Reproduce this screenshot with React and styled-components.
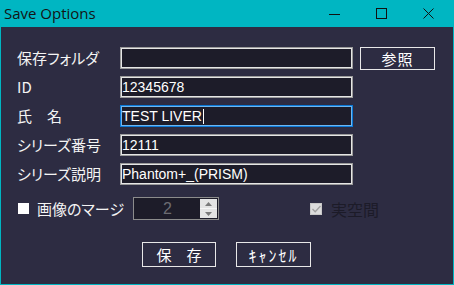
import React from "react";
import styled, { createGlobalStyle } from "styled-components";

const Global = createGlobalStyle`
  html, body { margin: 0; padding: 0; background: #2d2c42; }
  * { box-sizing: border-box; }
`;

const Window = styled.div`
  width: 454px;
  height: 285px;
  border: 1px solid #00b6c2;
  border-top: none;
  background: #2d2c42;
  display: flex;
  flex-direction: column;
  font-family: "Noto Sans CJK JP", "Noto Sans", sans-serif;
  font-feature-settings: "palt";
`;

const TitleBar = styled.div`
  height: 27px;
  margin: 0 -1px;
  background: #00b6c2;
  display: flex;
  align-items: center;
  flex-shrink: 0;
`;

const Title = styled.div`
  flex: 1;
  padding-left: 4px;
  font-family: "Open Sans", "Noto Sans", sans-serif;
  font-size: 15px;
  color: #141414;
  line-height: 27px;
`;

const Controls = styled.div`
  display: flex;
  height: 27px;
  margin-right: 2px;
`;

const Ctrl = styled.div`
  width: 47px;
  height: 27px;
  display: flex;
  align-items: center;
  justify-content: center;
`;

const Body = styled.div`
  flex: 1;
  padding: 20px 0 0 16px;
  display: flex;
  flex-direction: column;
`;

const Form = styled.div`
  display: grid;
  grid-template-columns: 103px 233px 75px;
  grid-auto-rows: 22px;
  column-gap: 0;
  row-gap: 7px;
`;

const Label = styled.div`
  color: #f4f4f4;
  font-size: 15px;
  line-height: 22px;
  white-space: pre;
`;

const Field = styled.div`
  height: 22px;
  background: #1d1c29;
  border: 1px solid ${(p) => (p.$focus ? "#0a78d6" : "#9a9a9a")};
  box-shadow: inset 0 0 0 1px ${(p) => (p.$focus ? "#6fb6f0" : "#e6e6e6")};
  color: #ffffff;
  font-family: "Liberation Sans", Arial, sans-serif;
  font-size: 14px;
  line-height: 20px;
  padding-left: 1px;
  white-space: pre;
  display: flex;
  align-items: center;
`;

const Caret = styled.span`
  display: inline-block;
  width: 1px;
  height: 15px;
  background: #ffffff;
  margin-left: 1px;
`;

const BrowseButton = styled.div`
  margin-left: 7px;
  width: 75px;
  height: 23px;
  border: 1px solid #e8e8e8;
  color: #ffffff;
  font-size: 15px;
  display: flex;
  align-items: center;
  justify-content: center;
  letter-spacing: 1px;
`;

const OptionRow = styled.div`
  margin-top: 12px;
  height: 23px;
  display: flex;
  align-items: center;
`;

const MergeLabel = styled.div`
  width: 116px;
  display: flex;
  align-items: center;
  color: #f4f4f4;
  font-size: 15px;
`;

const FilledBox = styled.span`
  width: 11px;
  height: 11px;
  background: #ffffff;
  margin-left: 1px;
  margin-right: 8px;
`;

const Spinner = styled.div`
  width: 86px;
  height: 23px;
  border: 1px solid #8c8c8c;
  background: #1d1c29;
  display: flex;
`;

const SpinValue = styled.div`
  flex: 1;
  color: #6c6c72;
  font-family: "Liberation Sans", Arial, sans-serif;
  font-size: 16px;
  display: flex;
  align-items: center;
  justify-content: center;
  padding-left: 2px;
`;

const SpinButtons = styled.div`
  width: 17px;
  margin: 1px;
  background: #e4e4e4;
  display: flex;
  flex-direction: column;
`;

const SpinHalf = styled.div`
  flex: 1;
  display: flex;
  align-items: center;
  justify-content: center;
  border-bottom: ${(p) => (p.$top ? "1px solid #f6f6f6" : "none")};
`;

const RealSpace = styled.div`
  margin-left: 91px;
  display: flex;
  align-items: center;
  gap: 9px;
  color: #1c1b28;
  font-size: 16px;
`;

const CheckBox = styled.div`
  width: 12px;
  height: 12px;
  background: #dcdcdc;
  border: 1px solid #c8c8c8;
  display: flex;
  align-items: center;
  justify-content: center;
`;

const ButtonRow = styled.div`
  margin-top: 22px;
  padding-left: 125px;
  display: flex;
  gap: 20px;
`;

const Button = styled.div`
  width: ${(p) => p.$w}px;
  height: 25px;
  border: 1px solid #e8e8e8;
  color: #ffffff;
  font-size: ${(p) => p.$fs || 15}px;
  letter-spacing: ${(p) => p.$ls || 0}px;
  white-space: pre;
  display: flex;
  align-items: center;
  justify-content: center;
`;

export default function App() {
  return (
    <>
      <Global />
      <Window>
        <TitleBar>
          <Title>Save Options</Title>
          <Controls>
            <Ctrl>
              <svg width="12" height="12" viewBox="0 0 12 12">
                <path d="M0 6.5h11" stroke="#111" strokeWidth="1" />
              </svg>
            </Ctrl>
            <Ctrl>
              <svg width="12" height="12" viewBox="0 0 12 12">
                <rect x="0.5" y="0.5" width="10" height="10" fill="none" stroke="#111" strokeWidth="1" />
              </svg>
            </Ctrl>
            <Ctrl>
              <svg width="12" height="12" viewBox="0 0 12 12">
                <path d="M0.5 0.5l10 10M10.5 0.5l-10 10" stroke="#111" strokeWidth="1" />
              </svg>
            </Ctrl>
          </Controls>
        </TitleBar>
        <Body>
          <Form>
            <Label>保存フォルダ</Label>
            <Field />
            <BrowseButton>参照</BrowseButton>

            <Label>ID</Label>
            <Field>12345678</Field>
            <span />

            <Label>氏　名</Label>
            <Field $focus>
              TEST LIVER<Caret />
            </Field>
            <span />

            <Label>シリーズ番号</Label>
            <Field>12111</Field>
            <span />

            <Label>シリーズ説明</Label>
            <Field>Phantom+_(PRISM)</Field>
            <span />
          </Form>
          <OptionRow>
            <MergeLabel>
              <FilledBox />
              画像のマージ
            </MergeLabel>
            <Spinner>
              <SpinValue>2</SpinValue>
              <SpinButtons>
                <SpinHalf $top>
                  <svg width="7" height="4" viewBox="0 0 7 4">
                    <path d="M3.5 0L7 4H0z" fill="#7a7a7a" />
                  </svg>
                </SpinHalf>
                <SpinHalf>
                  <svg width="7" height="4" viewBox="0 0 7 4">
                    <path d="M0 0h7L3.5 4z" fill="#7a7a7a" />
                  </svg>
                </SpinHalf>
              </SpinButtons>
            </Spinner>
            <RealSpace>
              <CheckBox>
                <svg width="9" height="8" viewBox="0 0 9 8">
                  <path d="M0.5 4l2.7 2.7L8.5 1" fill="none" stroke="#a0a0a0" strokeWidth="1.3" />
                </svg>
              </CheckBox>
              実空間
            </RealSpace>
          </OptionRow>
          <ButtonRow>
            <Button $w={74}>保　存</Button>
            <Button $w={75} $fs={16} $ls={2}>ｷｬﾝｾﾙ</Button>
          </ButtonRow>
        </Body>
      </Window>
    </>
  );
}
